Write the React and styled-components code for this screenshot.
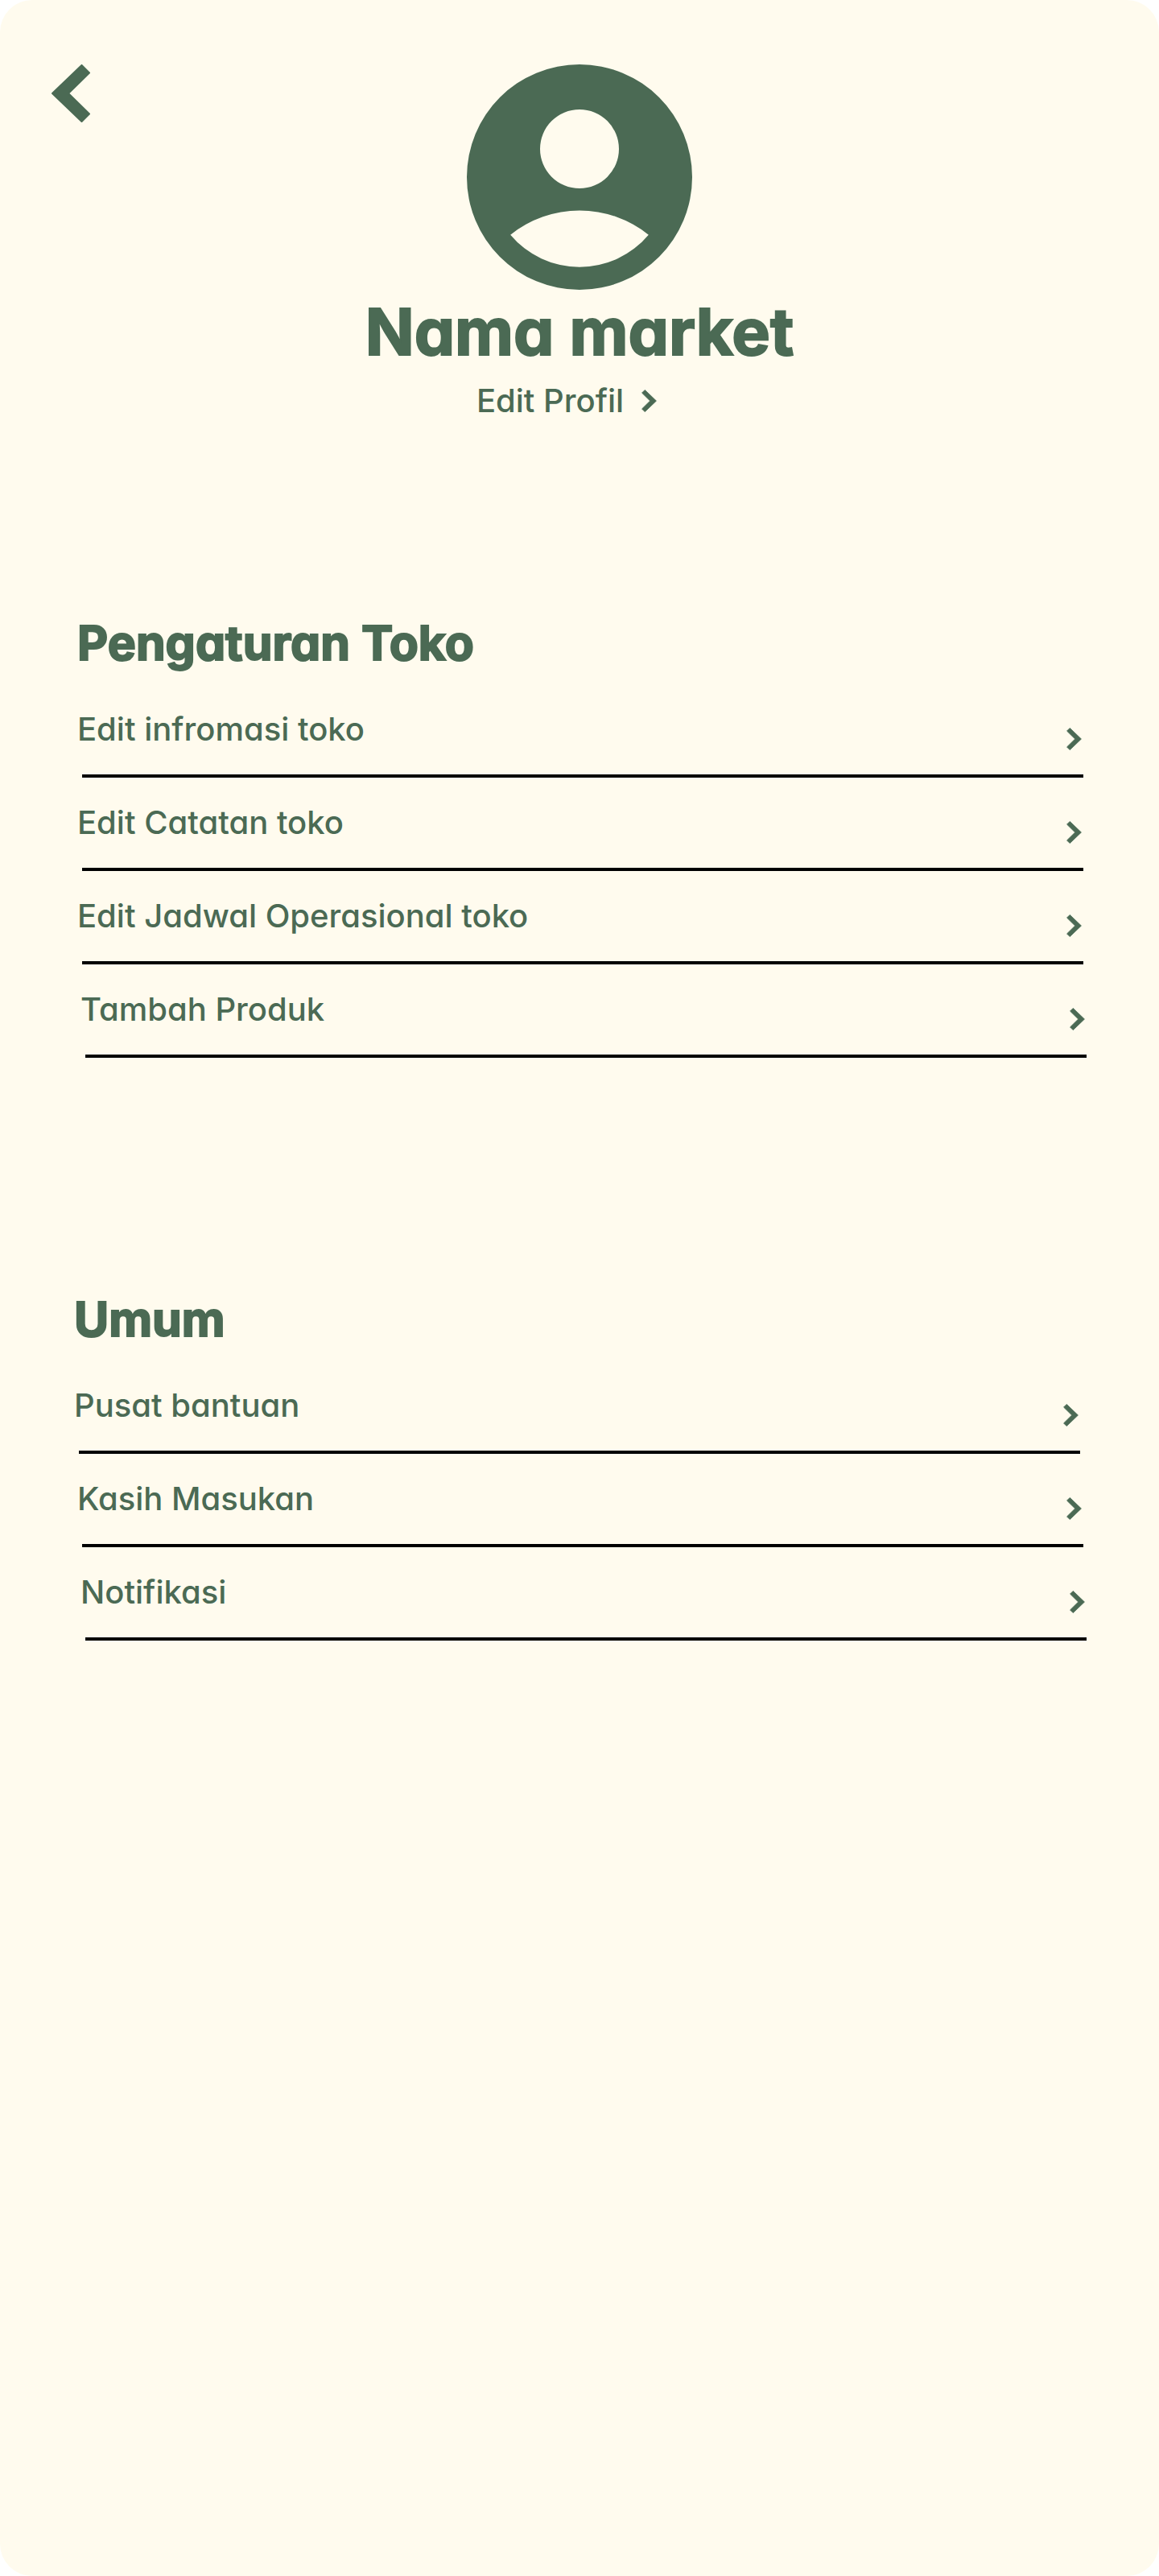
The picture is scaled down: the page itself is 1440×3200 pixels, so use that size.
import React from 'react';
import styled, { createGlobalStyle } from 'styled-components';

const green = '#4b6a54';
const cream = '#fffbee';

const GlobalStyle = createGlobalStyle`
  *, *::before, *::after {
    box-sizing: border-box;
  }
  body {
    margin: 0;
    background: #ffffff;
    color: ${green};
    font-family: Inter, "Open Sans", sans-serif;
    font-feature-settings: "cv11";
  }
`;

const Page = styled.main`
  min-height: 100vh;
  padding-bottom: 80px;
  border-radius: 40px;
  background: ${cream};
`;

const Header = styled.header`
  display: grid;
  grid-template-columns: 1fr auto 1fr;
  align-items: start;
  padding: 80px 64px 0;
`;

const BackButton = styled.button`
  display: block;
  justify-self: start;
  padding: 0;
  border: 0;
  background: none;
  color: inherit;
  cursor: pointer;
`;

const Profile = styled.div`
  display: flex;
  flex-direction: column;
  align-items: center;
`;

const AvatarIcon = styled.svg`
  display: block;
  width: 280px;
  height: 280px;
  fill: ${green};
`;

const ArrowIcon = styled.svg`
  display: block;
  flex: none;
  width: ${(p) => (p.$large ? 48 : 19)}px;
  height: ${(p) => (p.$large ? 72 : 28)}px;
  fill: currentColor;
  stroke: currentColor;
  stroke-width: 2;
  stroke-linejoin: round;
`;

const MarketName = styled.h1`
  margin: 0;
  font-size: 80px;
  font-weight: 700;
  line-height: 104px;
  white-space: nowrap;
  -webkit-text-stroke: 2px ${green};
`;

const EditProfile = styled.a`
  display: flex;
  align-items: center;
  gap: 22px;
  margin-top: 8px;
  padding-right: 32px;
  color: inherit;
  font-size: 40px;
  font-weight: 500;
  line-height: 52px;
  text-decoration: none;
`;

const Sections = styled.div`
  display: flex;
  flex-direction: column;
  gap: 284px;
  margin-top: 234px;
  padding: 0 94px 0 96px;
`;

const SectionTitle = styled.h2`
  margin: 0 0 10px ${(p) => p.$step * 4}px;
  font-size: 59px;
  font-weight: 700;
  line-height: 82px;
  -webkit-text-stroke: 2px ${green};
`;

const Menu = styled.ul`
  margin: 0;
  padding: 0;
  list-style: none;
`;

const MenuItem = styled.li`
  margin: 0 ${(p) => p.$step * -4}px 0 ${(p) => p.$step * 4}px;

  &::after {
    content: "";
    display: block;
    height: 4px;
    margin-left: 6px;
    background: #000000;
  }
`;

const MenuLink = styled.a`
  display: flex;
  align-items: flex-end;
  justify-content: space-between;
  padding: 30px 2px 30px 0;
  color: inherit;
  font-size: 40px;
  font-weight: 500;
  line-height: 52px;
  text-decoration: none;
`;

const sections = [
  {
    title: 'Pengaturan Toko',
    step: 0,
    items: [
      { label: 'Edit infromasi toko', step: 0 },
      { label: 'Edit Catatan toko', step: 0 },
      { label: 'Edit Jadwal Operasional toko', step: 0 },
      { label: 'Tambah Produk', step: 1 },
    ],
  },
  {
    title: 'Umum',
    step: -1,
    items: [
      { label: 'Pusat bantuan', step: -1 },
      { label: 'Kasih Masukan', step: 0 },
      { label: 'Notifikasi', step: 1 },
    ],
  },
];

function ArrowRight() {
  return (
    <ArrowIcon viewBox="0 0 48 72" aria-hidden="true">
      <path d="M47 36 10.5 71 1 61.5 27 36 1 10.5 10.5 1Z" />
    </ArrowIcon>
  );
}

function ArrowLeft() {
  return (
    <ArrowIcon $large viewBox="0 0 48 72" aria-hidden="true">
      <path d="M1 36 37.5 71 47 61.5 21 36 47 10.5 37.5 1Z" />
    </ArrowIcon>
  );
}

function Avatar() {
  return (
    <AvatarIcon viewBox="0 0 20 20" aria-hidden="true">
      <path
        fillRule="evenodd"
        d="M10 0a10 10 0 1 1 0 20a10 10 0 0 1 0-20ZM10 4a3.5 3.5 0 1 0 0 7a3.5 3.5 0 0 0 0-7ZM3.87 15.12A8 8 0 0 0 16.13 15.12A9.8 9.8 0 0 0 3.87 15.12Z"
      />
    </AvatarIcon>
  );
}

export default function App() {
  return (
    <>
      <GlobalStyle />
      <Page>
        <Header>
          <BackButton type="button" aria-label="Kembali">
            <ArrowLeft />
          </BackButton>
          <Profile>
            <Avatar />
            <MarketName>Nama market</MarketName>
            <EditProfile href="#profil">
              Edit Profil
              <ArrowRight />
            </EditProfile>
          </Profile>
        </Header>
        <Sections>
          {sections.map((section) => (
            <section key={section.title}>
              <SectionTitle $step={section.step}>{section.title}</SectionTitle>
              <Menu>
                {section.items.map((item) => (
                  <MenuItem key={item.label} $step={item.step}>
                    <MenuLink href="#menu">
                      {item.label}
                      <ArrowRight />
                    </MenuLink>
                  </MenuItem>
                ))}
              </Menu>
            </section>
          ))}
        </Sections>
      </Page>
    </>
  );
}
